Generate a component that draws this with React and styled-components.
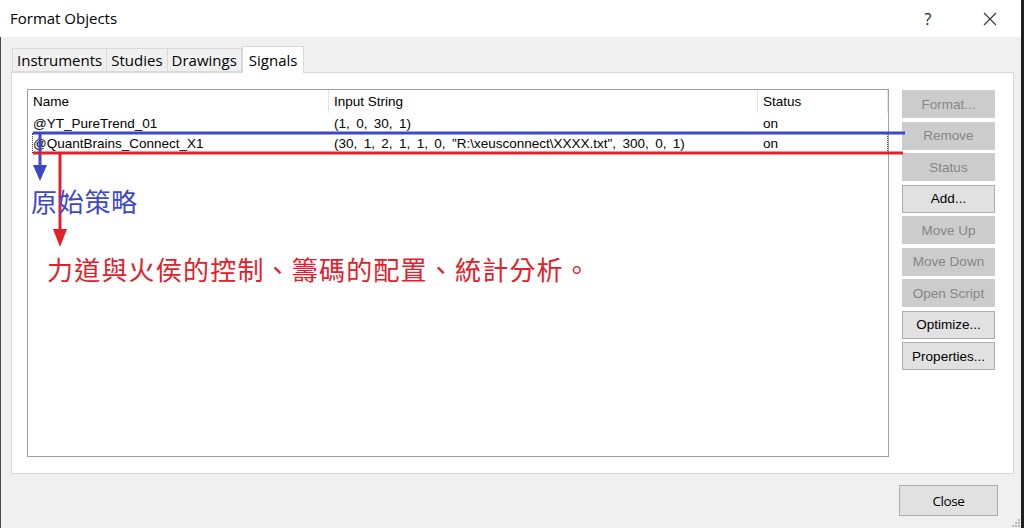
import React from 'react';
import styled, { createGlobalStyle } from 'styled-components';

const GlobalStyle = createGlobalStyle`
  html, body {
    margin: 0;
    padding: 0;
    background: #1f1f1f;
    overflow: hidden;
  }
`;

const uiFont = `"Open Sans", "Noto Sans", sans-serif`;
const listFont = `"Liberation Sans", Arial, sans-serif`;
const cjkFont = `"Noto Sans", "Noto Sans CJK TC", sans-serif`;

const Screen = styled.div`
  width: 1024px;
  height: 528px;
  display: flex;
  background: #1f1f1f;
`;

const Window = styled.div`
  position: relative;
  width: 1021px;
  height: 528px;
  display: flex;
  flex-direction: column;
  background: #f0f0f0;
`;

const TitleBar = styled.div`
  height: 37px;
  flex: none;
  background: #ffffff;
  display: flex;
  align-items: center;
  padding-left: 10px;
  font-family: ${uiFont};
  font-size: 15px;
  color: #000;
`;

const TitleText = styled.div`
  flex: 1;
  margin-top: -1px;
`;

const TitleButton = styled.div`
  width: 62px;
  height: 37px;
  display: flex;
  align-items: center;
  justify-content: center;
  font-family: ${uiFont};
  font-size: 16px;
  color: #222;
`;

const Body = styled.div`
  flex: 1;
  display: flex;
  flex-direction: column;
  padding: 10px 7px 0 10px;
  border-left: 1px solid #4a4a4a;
  position: relative;
`;

const TabStrip = styled.div`
  display: flex;
  align-items: flex-end;
  height: 25px;
  padding-left: 1px;
`;

const Tab = styled.div`
  height: ${({ $active }) => ($active ? '26px' : '22px')};
  margin-bottom: ${({ $active }) => ($active ? '-1px' : '0')};
  padding: 0 ${({ $active }) => ($active ? '6px' : '4px')};
  display: flex;
  align-items: center;
  background: ${({ $active }) => ($active ? '#ffffff' : '#f0f0f0')};
  border: 1px solid #d9d9d9;
  border-bottom: ${({ $active }) => ($active ? 'none' : '1px solid #d9d9d9')};
  border-left: ${({ $first, $active }) => ($first || $active ? '1px solid #d9d9d9' : 'none')};
  font-family: ${uiFont};
  font-size: 15px;
  color: #000;
  position: relative;
  z-index: ${({ $active }) => ($active ? 1 : 0)};
`;

const Panel = styled.div`
  height: 402px;
  box-sizing: border-box;
  background: #ffffff;
  border: 1px solid #d9d9d9;
  display: flex;
  padding: 16px 0 0 15px;
  gap: 13px;
`;

const ListBox = styled.div`
  width: 862px;
  height: 368px;
  box-sizing: border-box;
  border: 1px solid #a0a0a0;
  background: #fff;
  display: flex;
  flex-direction: column;
`;

const HeaderRow = styled.div`
  display: grid;
  grid-template-columns: 301px 429px 130px;
  height: 23px;
`;

const HeaderCell = styled.div`
  display: flex;
  align-items: center;
  padding-left: 5px;
  border-right: 1px solid #e5e5e5;
  font-family: ${listFont};
  font-size: 13.5px;
  color: #000;
`;

const Row = styled.div`
  position: relative;
  display: grid;
  grid-template-columns: 301px 429px 1fr;
  height: 20px;

  ${({ $focused }) =>
    $focused &&
    `
    &::before {
      content: '';
      position: absolute;
      inset: 0 0 0 4px;
      border: 1px dotted #444;
    }
  `}
`;

const Cell = styled.div`
  display: flex;
  align-items: center;
  padding-left: 5px;
  font-family: ${listFont};
  font-size: 13.5px;
  word-spacing: ${({ $tight }) => ($tight ? '-0.55px' : '0')};
  color: #000;
  white-space: pre;
`;

const ButtonColumn = styled.div`
  width: 93px;
  display: flex;
  flex-direction: column;
  gap: 3.5px;
  padding-top: 1px;
`;

const SideButton = styled.div`
  height: 28px;
  box-sizing: border-box;
  display: flex;
  align-items: center;
  justify-content: center;
  background: ${({ $disabled }) => ($disabled ? '#cccccc' : '#e1e1e1')};
  border: 1px solid ${({ $disabled }) => ($disabled ? '#cccccc' : '#adadad')};
  font-family: ${listFont};
  font-size: 13.5px;
  color: ${({ $disabled }) => ($disabled ? '#868686' : '#000')};
`;

const Footer = styled.div`
  display: flex;
  justify-content: flex-end;
  padding: 11px 16px 0 0;
`;

const CloseButton = styled.div`
  width: 99px;
  height: 31px;
  box-sizing: border-box;
  display: flex;
  align-items: center;
  justify-content: center;
  background: #e1e1e1;
  border: 1px solid #adadad;
  font-family: ${uiFont};
  font-size: 13.5px;
  letter-spacing: -0.4px;
  color: #000;
`;

const Grip = styled.svg`
  position: absolute;
  right: 1px;
  bottom: 1px;
`;

const Overlay = styled.svg`
  position: absolute;
  left: 0;
  top: 0;
  pointer-events: none;
`;

const Note = styled.div`
  position: absolute;
  left: ${({ $x }) => $x}px;
  top: ${({ $y }) => $y}px;
  font-family: ${cjkFont};
  font-size: 26px;
  line-height: 30px;
  letter-spacing: ${({ $spacing }) => $spacing}px;
  color: ${({ $color }) => $color};
  white-space: nowrap;
`;

const BLUE = '#3d48c8';
const RED = '#e3202a';

const signals = [
  { name: '@YT_PureTrend_01', input: '(1,  0,  30,  1)', status: 'on' },
  {
    name: '@QuantBrains_Connect_X1',
    input: '(30,  1,  2,  1,  1,  0,  "R:\\xeusconnect\\XXXX.txt",  300,  0,  1)',
    status: 'on',
    focused: true,
  },
];

const buttons = [
  { label: 'Format...', disabled: true },
  { label: 'Remove', disabled: true },
  { label: 'Status', disabled: true },
  { label: 'Add...' },
  { label: 'Move Up', disabled: true },
  { label: 'Move Down', disabled: true },
  { label: 'Open Script', disabled: true },
  { label: 'Optimize...' },
  { label: 'Properties...' },
];

const tabs = ['Instruments', 'Studies', 'Drawings', 'Signals'];

const App = () => (
  <Screen>
    <GlobalStyle />
    <Window>
      <TitleBar>
        <TitleText>Format Objects</TitleText>
        <TitleButton>?</TitleButton>
        <TitleButton>
          <svg width="14" height="14" viewBox="0 0 14 14">
            <path d="M1 1 L13 13 M13 1 L1 13" stroke="#333" strokeWidth="1.1" fill="none" />
          </svg>
        </TitleButton>
      </TitleBar>

      <Body>
        <TabStrip>
          {tabs.map((t, i) => (
            <Tab key={t} $first={i === 0} $active={t === 'Signals'}>
              {t}
            </Tab>
          ))}
        </TabStrip>

        <Panel>
          <ListBox>
            <HeaderRow>
              <HeaderCell>Name</HeaderCell>
              <HeaderCell>Input String</HeaderCell>
              <HeaderCell>Status</HeaderCell>
            </HeaderRow>
            {signals.map((s) => (
              <Row key={s.name} $focused={s.focused}>
                <Cell>{s.name}</Cell>
                <Cell $tight>{s.input}</Cell>
                <Cell>{s.status}</Cell>
              </Row>
            ))}
          </ListBox>

          <ButtonColumn>
            {buttons.map((b) => (
              <SideButton key={b.label} $disabled={b.disabled}>
                {b.label}
              </SideButton>
            ))}
          </ButtonColumn>
        </Panel>

        <Footer>
          <CloseButton>Close</CloseButton>
        </Footer>

        <Grip width="8" height="8" viewBox="0 0 8 8">
          {[[6, 0], [6, 3], [3, 3], [6, 6], [3, 6], [0, 6]].map(([x, y]) => (
            <rect key={`${x}-${y}`} x={x} y={y} width="2" height="2" fill="#b4b4b4" />
          ))}
        </Grip>
      </Body>

      {/* annotation marks drawn over the list */}
      <Overlay width="1021" height="528" viewBox="0 0 1021 528">
        <line x1="33" y1="133" x2="905" y2="133" stroke={BLUE} strokeWidth="3" />
        <line x1="40" y1="133" x2="40" y2="166" stroke={BLUE} strokeWidth="3" />
        <polygon points="33,165 47,165 40,181" fill={BLUE} />
        <line x1="33" y1="153" x2="903" y2="153" stroke={RED} strokeWidth="3" />
        <line x1="60" y1="153" x2="60" y2="230" stroke={RED} strokeWidth="3" />
        <polygon points="53,229 67,229 60,247" fill={RED} />
      </Overlay>
      <Note $x={31} $y={187} $spacing={0.7} $color={BLUE}>原始策略</Note>
      <Note $x={47} $y={255} $spacing={1.2} $color={RED}>力道與火侯的控制、籌碼的配置、統計分析。</Note>
    </Window>
  </Screen>
);

export default App;
